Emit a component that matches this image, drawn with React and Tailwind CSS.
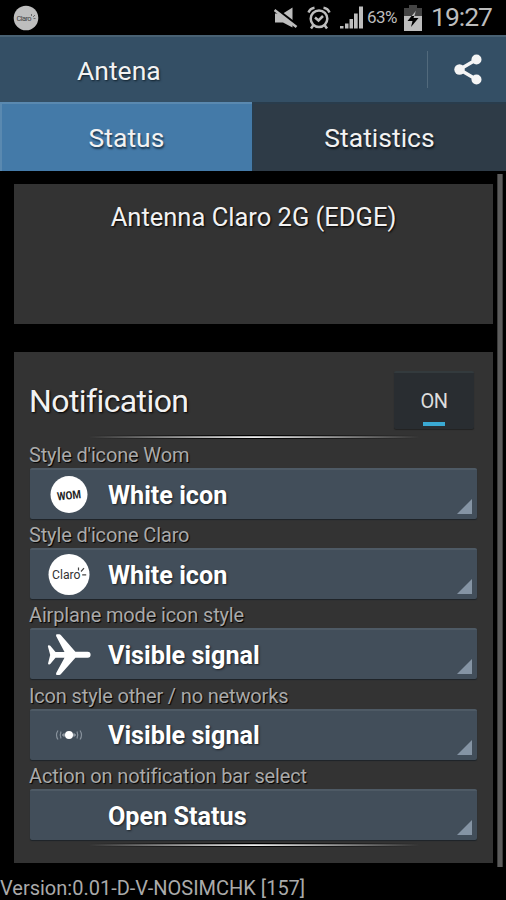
import { useState } from 'react'

function WomIcon() {
  return (
    <svg width="44" height="44" viewBox="0 0 44 44">
      <circle cx="22" cy="21.5" r="18.500" fill="#fff" />
      <text x="10" y="26.300" fontSize="11.500" fontWeight="700" textLength="24" lengthAdjust="spacingAndGlyphs"
        fontFamily="Roboto, sans-serif" fill="#222" transform="rotate(-6 22 22)">WOM</text>
    </svg>
  )
}

function ClaroIcon() {
  return (
    <svg width="44" height="44" viewBox="0 0 44 44">
      <circle cx="22" cy="21.500" r="20.500" fill="#fff" />
      <text x="5" y="26" fontSize="12" textLength="28.500" lengthAdjust="spacingAndGlyphs" fontFamily="Roboto, sans-serif" fill="#333">Claro</text>
      <path d="M31.500 17.500v-3M34 18.500l3-3.400M35.200 21.800h4" stroke="#444" strokeWidth="1.200" fill="none" />
    </svg>
  )
}

function PlaneIcon() {
  return (
    <svg width="44" height="44" viewBox="0 0 44 44" fill="#fff">
      <path d="M8.500 18.900h9L9.200 3.200q-.8-1.900.8-1.900h2.200q1 0 1.800.9l14.400 16.600h12.200a3 3 0 0 1 0 6H28.400L14 41q-.8.900-1.800.9H10q-1.600 0-.8-1.900l8.300-15.200h-9l-5 6q-.7.800-1.700.600-1-.3-.7-1.200L3.200 21.900.9 13.500q-.3-1 .7-1.300 1-.2 1.700.600z" />
    </svg>
  )
}

function SignalIcon() {
  return (
    <svg width="44" height="44" viewBox="0 0 44 44" fill="none" stroke="#87919b" strokeWidth="1.200">
      <path d="M11 16.500q-3 4.500 0 9M14 17.500q-1.500 3.500 0 7M17 19v4M33 16.500q3 4.500 0 9M30 17.500q1.500 3.500 0 7M27 19v4" />
      <path d="M15 21h14" stroke="#a3abb3" />
      <circle cx="22" cy="21" r="4" fill="#fff" stroke="none" />
    </svg>
  )
}

const opciones = [
  { label: "Style d'icone Wom", valor: 'White icon', Icono: WomIcon },
  { label: "Style d'icone Claro", valor: 'White icon', Icono: ClaroIcon },
  { label: 'Airplane mode icon style', valor: 'Visible signal', Icono: PlaneIcon },
  { label: 'Icon style other / no networks', valor: 'Visible signal', Icono: SignalIcon },
  { label: 'Action on notification bar select', valor: 'Open Status', Icono: null },
]

function StatusBar() {
  return (
    <div className="h-[35px] shrink-0 flex items-center justify-between pl-[13px] pr-[14px] text-[#bdbdbd]">
      <svg width="26" height="26" viewBox="0 0 26 26">
        <circle cx="13" cy="13" r="12.300" fill="#bebebe" />
        <text x="3.500" y="15.500" fontSize="7.500" textLength="15" fontFamily="Roboto, sans-serif" fill="#444">Claro</text>
        <path d="M18.500 11v-2M20 12l2-2M20.500 13.500h2" stroke="#555" strokeWidth=".8" />
      </svg>
      <div className="flex items-center">
        <svg width="24" height="24" viewBox="0 0 24 24" fill="#bdbdbd">
          <path d="M1 7.500h8L18.500 1.500v20L9 16.500H1z" />
          <path d="M1 2.800l21.500 16.500" stroke="#000" strokeWidth="3.600" />
          <path d="M.5 4l22 17" stroke="#bdbdbd" strokeWidth="2.600" />
        </svg>
        <svg className="ml-[9px]" width="24" height="24" viewBox="0 0 24 24" fill="none" stroke="#bdbdbd" strokeWidth="2.500">
          <circle cx="12" cy="12.700" r="8.300" />
          <path d="M1.500 6.500q1.500-4 6-4.700M22.500 6.500q-1.500-4-6-4.700M6.500 19l-2.500 3.500M17.500 19l2.500 3.500M8 11.500l3.500 3 4.500-4.500" />
        </svg>
        <svg className="ml-[9px]" width="24" height="24" viewBox="0 0 24 24" fill="#bdbdbd">
          <path d="M0 20h3.500v2.500H0zM5 17.500h3.500v5H5zM9.500 13h3.500v9.500H9.500zM14 7.500h3.700v15H14zM19 .5h4v22h-4z" />
        </svg>
        <span className="ml-[3px] mt-px w-[31px] text-[17px] tracking-[-0.600px]">63%</span>
        <svg className="ml-[5px]" width="20" height="28" viewBox="0 0 20 28">
          <path d="M6 1h8v3h5v8H1V4h5z" fill="#444" />
          <path d="M1 12h18v15H1z" fill="#bdbdbd" />
          <path d="M13 6.500L4.500 17h5L8 23l7.500-9h-5z" fill="#000" />
          <path d="M13 6.500L8.600 12h2.900z" fill="#bdbdbd" />
        </svg>
        <span className="ml-[8px] w-[61px] text-[26.500px] leading-none whitespace-nowrap tracking-[-1px]">19:27</span>
      </div>
    </div>
  )
}

function Linea({ className }) {
  return (
    <div className={`h-[4px] ml-[60px] mr-[74px] flex flex-col ${className}`}>
      <div className="h-px bg-linear-to-r from-transparent via-black to-transparent" />
      <div className="h-px bg-linear-to-r from-transparent via-[#bbb] to-transparent" />
      <div className="h-px bg-linear-to-r from-transparent via-[#eee] to-transparent" />
      <div className="h-px bg-linear-to-r from-transparent via-black to-transparent" />
    </div>
  )
}

function Selector({ label, valor, Icono }) {
  return (
    <div className="h-[80.200px]">
      <p className="h-[28px] pt-px text-[20px] leading-[28px] tracking-[-0.150px] text-[#aaa] whitespace-nowrap [text-shadow:1px_1px_1px_#000]">{label}</p>
      <button className="relative ml-px w-[447px] h-[51px] flex items-center bg-[#424e5a] border-t-2 border-[#4e5a65] rounded-[2px] shadow-[0_1px_1px_#1d2329] text-white text-left">
        <span className="ml-[17px] w-[44px] h-[44px] mt-px">{Icono && <Icono />}</span>
        <span className="ml-[17px] mt-[2px] text-[25.200px] leading-none font-bold whitespace-nowrap [text-shadow:1px_1px_2px_#1d2329]">{valor}</span>
        <svg className="absolute right-[5px] bottom-[5px]" width="15" height="15" viewBox="0 0 15 15">
          <path d="M15 0v15H0z" fill="#8594a4" />
        </svg>
      </button>
    </div>
  )
}

export default function App() {
  const [activo, setActivo] = useState(true)

  return (
    <div className="w-[506px] h-[900px] overflow-hidden bg-black text-[#f2f2f2] font-[Roboto,sans-serif] flex flex-col">
      <StatusBar />

      {/* Barra superior */}
      <header className="h-[67px] shrink-0 flex items-center bg-[#344f65] border-t-2 border-[#486173] pl-[77px] pr-[23px]">
        <h1 className="text-[26.500px] leading-none mt-[4px] [text-shadow:1px_1px_2px_#10202c]">Antena</h1>
        <div className="ml-auto w-px h-[37px] bg-[#526a7c]" />
        <button className="ml-[26px]">
          <svg width="29" height="32" viewBox="0 0 29 32" fill="#f5f5f5">
            <path d="M22.500 5.500L5.500 15.500l17 10" fill="none" stroke="#f5f5f5" strokeWidth="3.500" />
            <circle cx="22.500" cy="5.500" r="5" />
            <circle cx="5.500" cy="15.500" r="5.200" />
            <circle cx="22.500" cy="25.500" r="5" />
          </svg>
        </button>
      </header>

      {/* Tabs */}
      <nav className="h-[69px] shrink-0 flex text-[26.500px]">
        <button className="w-[252px] pr-px pt-px bg-[#447aa8] border-t-2 border-l-2 border-t-[#5a89b0] border-l-[#5a89b0] [text-shadow:1px_2px_2px_#1b344a]">Status</button>
        <button className="flex-1 pr-px pt-px bg-[#2e3b47] border-l-2 border-t-2 border-[#293c4c] [text-shadow:1px_2px_2px_#10161c]">Statistics</button>
      </nav>

      <main className="flex h-[696px] shrink-0 pl-[14px]">
        <div className="w-[479px] pt-[13px]">
          <section className="h-[140px] bg-[#333] pt-[19px] text-center text-[25.500px] leading-[28px] [text-shadow:1px_1px_2px_#000]">
            Antenna Claro 2G (EDGE)
          </section>

          <section className="mt-[28px] h-[511px] bg-[#333] pl-[15px]">
            <div className="h-[83px] flex items-center justify-between pt-[14px] pr-[19px]">
              <h2 className="mt-px text-[32px] leading-none tracking-[-0.600px] [text-shadow:1px_1px_2px_#000]">Notification</h2>
              <button onClick={() => setActivo(!activo)}
                className="w-[80px] h-[58px] -mt-[2px] flex flex-col items-center bg-[#292d31] border-t-2 border-[#333a3d] rounded-[2px] shadow-[0_1px_1px_#222] text-[20px]">
                <span className="mt-[13px] leading-[30px] tracking-[-0.400px] text-[#ddd]">{activo ? 'ON' : 'OFF'}</span>
                <span className={`mt-[6px] w-[22px] h-[4px] ${activo ? 'bg-[#3aa9d3]' : 'bg-[#555]'}`} />
              </button>
            </div>
            <Linea className="" />
            <div className="mt-px">
              {opciones.map(o => <Selector key={o.label} {...o} />)}
            </div>
            <Linea className="mt-[2px]" />
          </section>
        </div>
        <div className="ml-[4px] mt-[3px] w-[6px] h-[693px] bg-[#5c5c5c] border-x border-[#3c3c3c]" />
      </main>

      <footer className="text-[20px] leading-[24px] pt-[9px] text-[#aaa] whitespace-nowrap">Version:0.01-D-V-NOSIMCHK [157]</footer>
    </div>
  )
}
